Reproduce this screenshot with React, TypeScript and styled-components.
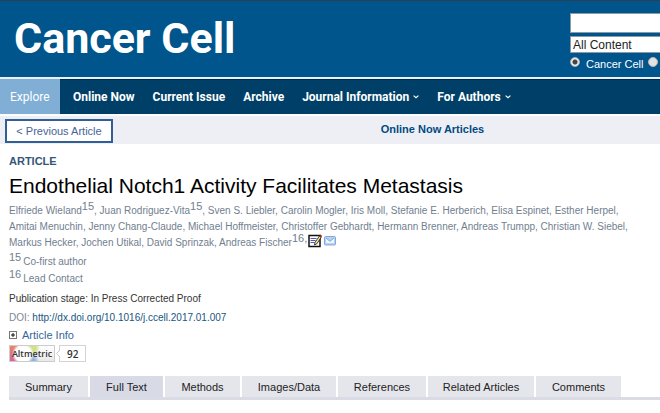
import React from "react";
import styled, { createGlobalStyle } from "styled-components";

const Global = createGlobalStyle`
  * { box-sizing: border-box; }
  body {
    margin: 0;
    background: #fff;
    color: #333;
    font-family: "Liberation Sans", Arial, sans-serif;
    font-size: 11px;
    overflow: hidden;
  }
  a { color: inherit; text-decoration: none; }
`;

const Header = styled.header`
  display: flex;
  justify-content: space-between;
  align-items: flex-start;
  height: 77px;
  background: #00558c;
  border-top: 1px solid #2b3f51;
`;

const Logo = styled.a`
  padding: 11px 0 0 14px;
  color: #fff;
  font-family: Roboto, "Liberation Sans", sans-serif;
  font-size: 43px;
  font-weight: bold;
  line-height: 52px;
  white-space: nowrap;
`;

const Search = styled.form`
  display: flex;
  flex-direction: column;
  width: 90px;
  padding-top: 12px;
`;

const SearchInput = styled.input`
  width: 100%;
  height: 20px;
  padding: 0 4px;
  border: 1px solid #8c9aa6;
  border-right: 0;
  border-radius: 0;
  background: #fff;
  font: inherit;
`;

const ScopeSelect = styled.select`
  appearance: none;
  width: 100%;
  height: 17px;
  margin-top: 3px;
  padding: 0 2px;
  border: 1px solid #8c9aa6;
  border-right: 0;
  border-radius: 0;
  background: #fff;
  color: #222;
  font-family: inherit;
  font-size: 12px;
`;

const Radios = styled.div`
  display: flex;
  align-items: center;
  height: 15px;
  margin-top: 2px;
  color: #fff;
  white-space: nowrap;
`;

const Radio = styled.input`
  appearance: none;
  flex: none;
  width: 10px;
  height: 10px;
  margin: 0 0 2px;
  border: 1px solid #b5b5b5;
  border-radius: 50%;
  background: #e2e2e2;
  &:checked { background: radial-gradient(circle, #444 0 2px, #e8e8e8 3px); }
`;

const RadioLabel = styled.label`
  margin: 2px 5px 0 6px;
`;

const Nav = styled.nav`
  display: flex;
  align-items: stretch;
  gap: 18px;
  height: 37px;
  border-top: 2px solid #eaf1f6;
  background: #003f67;
  box-shadow: inset 0 1px #00284f;
  color: #fff;
  font-family: Roboto, "Liberation Sans", sans-serif;
  font-size: 12px;
  font-weight: bold;
`;

const Explore = styled.a`
  display: flex;
  align-items: center;
  width: 60px;
  padding-left: 10px;
  margin-right: -5px;
  background: #80aed5;
  font-weight: normal;
`;

const NavItem = styled.a`
  display: flex;
  align-items: center;
  gap: 4px;
  padding-top: 1px;
  white-space: nowrap;
`;

const Caret = () => (
  <svg width="6" height="4" viewBox="0 0 6 4" fill="none" stroke="#fff" strokeWidth="1.2" aria-hidden="true">
    <path d="M.6 .6 3 2.8 5.4 .6" />
  </svg>
);

const SubBar = styled.div`
  display: grid;
  grid-template-columns: 108px 1fr;
  align-items: start;
  height: 30px;
  padding: 3px 0 0 5px;
  border-top: 2px solid #fbfcfd;
  background: #eeeff4;
`;

const Previous = styled.a`
  display: flex;
  align-items: center;
  justify-content: center;
  height: 24px;
  border: 2px solid #305f97;
  background: #fff;
  color: #44659a;
`;

const IssueLink = styled.a`
  justify-self: center;
  padding: 4px 0 0 92px;
  color: #004b83;
  font-weight: bold;
  line-height: 13px;
`;

const Article = styled.main`
  padding: 10px 0 0 9px;
`;

const Kind = styled.div`
  color: #34567a;
  font-weight: bold;
  line-height: 14px;
`;

const Title = styled.h1`
  margin: 4px 0 0;
  color: #000;
  font-size: 21px;
  font-weight: normal;
  line-height: 28px;
`;

const Authors = styled.div`
  padding-top: 3px;
  color: #71808f;
  font-size: 10px;
  line-height: 16px;
  white-space: pre;
`;

const Line = styled.div`
  display: flex;
  height: 16px;
`;

const Sup = styled.sup`
  align-self: flex-start;
  margin-top: -5px;
  font-size: 11px;
  line-height: 16px;
`;

const Notes = styled.div`
  padding-top: 2px;
`;

const Note = styled.div`
  display: flex;
  gap: 2px;
  height: 17px;
  padding-top: 1px;
  color: #71808f;
  font-size: 10px;
  line-height: 16px;
`;

const Stage = styled.div`
  margin-top: 4px;
  font-size: 10px;
  line-height: 16px;
`;

const Doi = styled.div`
  margin-top: 3px;
  color: #7b8894;
  font-size: 10px;
  line-height: 16px;
`;

const DoiLink = styled.a`
  color: #175681;
`;

const Info = styled.button`
  display: flex;
  align-items: center;
  gap: 5px;
  height: 18px;
  padding: 0;
  border: 0;
  background: none;
  color: #36669a;
  font: inherit;
`;

const Altmetric = styled.a`
  display: flex;
  gap: 4px;
  width: 77px;
  height: 17px;
  margin-top: 1px;
  color: #333;
  font-family: "Open Sans", sans-serif;
  font-size: 9px;
  font-weight: 600;
`;

const BadgeName = styled.span`
  display: flex;
  align-items: center;
  justify-content: center;
  width: 46px;
  border: 1px solid #ccc;
  background:
    radial-gradient(circle at 13px 8px, #fff 0 8px, transparent 11px),
    radial-gradient(circle at 22px 15px, #8fb5e0 0 3px, transparent 7px),
    radial-gradient(circle at 22px 2px, #cfe08a 0 4px, transparent 8px),
    linear-gradient(#e8866a, #d5679a) 0 0 / 8px 100% no-repeat,
    linear-gradient(#fff, #e9e9e9);
`;

const BadgeScore = styled.span`
  display: flex;
  align-items: center;
  flex: 1;
  border: 1px solid #d4d4d4;
  font-size: 10px;
`;

const BadgeNotch = styled.svg`
  flex: none;
  margin: 0 7px 0 -4px;
`;

const Tabs = styled.nav`
  display: flex;
  gap: 2px;
  margin-top: 14px;
  border-bottom: 3px solid #d9dbe5;
`;

const Tab = styled.a<{ $w: number; $active?: boolean }>`
  display: flex;
  align-items: center;
  justify-content: center;
  width: ${(p) => p.$w}px;
  height: 21px;
  background: ${(p) => (p.$active ? "#d8dae5" : "#e5e6ec")};
  color: #222;
`;

const nav = [
  { label: "Online Now" },
  { label: "Current Issue" },
  { label: "Archive" },
  { label: "Journal Information", menu: true },
  { label: "For Authors", menu: true },
];

const tabs = [
  { label: "Summary", w: 79 },
  { label: "Full Text", w: 73, active: true },
  { label: "Methods", w: 75 },
  { label: "Images/Data", w: 94 },
  { label: "References", w: 88 },
  { label: "Related Articles", w: 106 },
  { label: "Comments", w: 85 },
];

const NoteIcon = () => (
  <svg width="14" height="14" viewBox="0 0 14 14" aria-hidden="true">
    <rect x="1" y="1.5" width="11" height="11" fill="#fff" stroke="#111" strokeWidth="1.5" />
    <path d="M2.5 4.5h6M2.5 6.5h5M2.5 8.5h4" stroke="#5555b5" />
    <path d="M6.5 11 7 8.4 11.5 2 13.2 3.3 8.8 9.8Z" fill="#f0e59a" stroke="#111" strokeWidth=".8" />
    <path d="M11.7 1.4 13.6 2.8" stroke="#a22" strokeWidth="2" />
  </svg>
);

const MailIcon = () => (
  <svg width="12" height="10" viewBox="0 0 12 10" aria-hidden="true">
    <rect x=".5" y=".5" width="11" height="8.5" rx="1" fill="#b7d2f1" stroke="#83a9dc" />
    <path d="M2 2.2 6 5.5 10 2.2V7H2Z" fill="#f2f8ff" />
    <path d="M2 2 6 5.3 10 2" fill="none" stroke="#7fa7d9" />
  </svg>
);

const Icons = styled.span`
  display: flex;
  align-items: center;
  gap: 2px;
  height: 12px;
  margin-left: 1px;
`;

export default function App() {
  return (
    <>
      <Global />
      <Header>
        <Logo href="#">Cancer Cell</Logo>
        <Search>
          <SearchInput type="text" aria-label="Search" />
          <ScopeSelect aria-label="Search in">
            <option>All Content</option>
          </ScopeSelect>
          <Radios>
            <Radio id="cell" type="radio" name="scope" defaultChecked />
            <RadioLabel htmlFor="cell">Cancer Cell</RadioLabel>
            <Radio type="radio" name="scope" aria-label="All journals" />
          </Radios>
        </Search>
      </Header>
      <Nav>
        <Explore href="#">Explore</Explore>
        {nav.map((n) => (
          <NavItem href="#" key={n.label}>
            {n.label}
            {n.menu && <Caret />}
          </NavItem>
        ))}
      </Nav>
      <SubBar>
        <Previous href="#">&lt; Previous Article</Previous>
        <IssueLink href="#">Online Now Articles</IssueLink>
      </SubBar>
      <Article>
        <Kind>ARTICLE</Kind>
        <Title>Endothelial Notch1 Activity Facilitates Metastasis</Title>
        <Authors>
          <Line>
            Elfriede Wieland<Sup>15</Sup>, Juan Rodriguez-Vita<Sup>15</Sup>, Sven S. Liebler, Carolin Mogler, Iris Moll, Stefanie E. Herberich, Elisa Espinet, Esther Herpel,
          </Line>
          <Line>
            Amitai Menuchin, Jenny Chang-Claude, Michael Hoffmeister, Christoffer Gebhardt, Hermann Brenner, Andreas Trumpp, Christian W. Siebel,
          </Line>
          <Line>
            Markus Hecker, Jochen Utikal, David Sprinzak, Andreas Fischer<Sup>16,</Sup>
            <Icons><NoteIcon /><MailIcon /></Icons>
          </Line>
        </Authors>
        <Notes>
          <Note><Sup>15</Sup>Co-first author</Note>
          <Note><Sup>16</Sup>Lead Contact</Note>
        </Notes>
        <Stage>Publication stage: In Press Corrected Proof</Stage>
        <Doi>DOI: <DoiLink href="#">http://dx.doi.org/10.1016/j.ccell.2017.01.007</DoiLink></Doi>
        <Info type="button">
          <svg width="8" height="8" viewBox="0 0 8 8" fill="none" aria-hidden="true">
            <rect x=".5" y=".5" width="7" height="7" stroke="#777" />
            <path d="M2 4h4M4 2v4" stroke="#111" />
          </svg>
          Article Info
        </Info>
        <Altmetric href="#">
          <BadgeName>Altmetric</BadgeName>
          <BadgeScore>
            <BadgeNotch width="4" height="7" viewBox="0 0 4 7" aria-hidden="true">
              <path d="M4 0 .5 3.5 4 7" fill="#fff" stroke="#ccc" />
            </BadgeNotch>
            92
          </BadgeScore>
        </Altmetric>
        <Tabs>
          {tabs.map((t) => (
            <Tab href="#" key={t.label} $w={t.w} $active={t.active}>{t.label}</Tab>
          ))}
        </Tabs>
      </Article>
    </>
  );
}
